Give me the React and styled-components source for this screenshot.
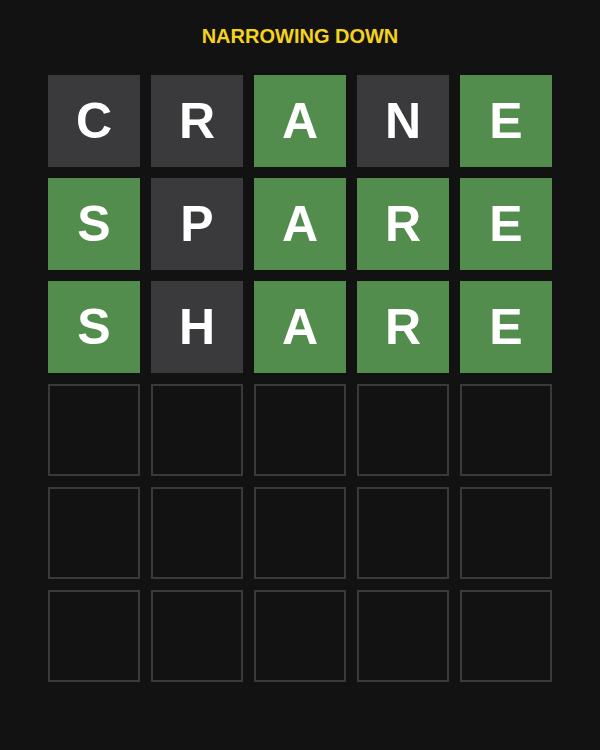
import styled, { createGlobalStyle } from "styled-components";

// guesses so far, with the colour of each letter
const guesses = [
  [["C", "absent"], ["R", "absent"], ["A", "correct"], ["N", "absent"], ["E", "correct"]],
  [["S", "correct"], ["P", "absent"], ["A", "correct"], ["R", "correct"], ["E", "correct"]],
  [["S", "correct"], ["H", "absent"], ["A", "correct"], ["R", "correct"], ["E", "correct"]],
];

const ROWS = 6;
const COLS = 5;

const colors = {
  correct: "#538d4e",
  absent: "#3a3a3c",
};

const GlobalStyle = createGlobalStyle`
  body {
    margin: 0;
    background: #121213;
    font-family: "Liberation Sans", Arial, sans-serif;
  }
`;

const Page = styled.div`
  width: 600px;
  height: 750px;
  display: flex;
  flex-direction: column;
  align-items: center;
  padding-top: 24px;
  box-sizing: border-box;
`;

const Title = styled.h1`
  margin: 0;
  color: #f5d21c;
  font-size: 20px;
  font-weight: bold;
  line-height: 24px;
`;

const Board = styled.div`
  margin-top: 27px;
  display: grid;
  grid-template-columns: repeat(${COLS}, 92px);
  grid-auto-rows: 92px;
  gap: 11px;
`;

const Tile = styled.div`
  box-sizing: border-box;
  display: flex;
  align-items: center;
  justify-content: center;
  color: #ffffff;
  font-size: 50px;
  font-weight: bold;
  background: ${(p) => (p.$state ? colors[p.$state] : "transparent")};
  border: ${(p) => (p.$state ? "none" : "2px solid #3a3a3c")};
`;

function App() {
  const tiles = [];
  for (let r = 0; r < ROWS; r++) {
    for (let c = 0; c < COLS; c++) {
      const cell = guesses[r] && guesses[r][c];
      tiles.push(
        <Tile key={`${r}-${c}`} $state={cell ? cell[1] : null}>
          {cell ? cell[0] : ""}
        </Tile>
      );
    }
  }

  return (
    <>
      <GlobalStyle />
      <Page>
        <Title>NARROWING DOWN</Title>
        <Board>{tiles}</Board>
      </Page>
    </>
  );
}

export default App;
